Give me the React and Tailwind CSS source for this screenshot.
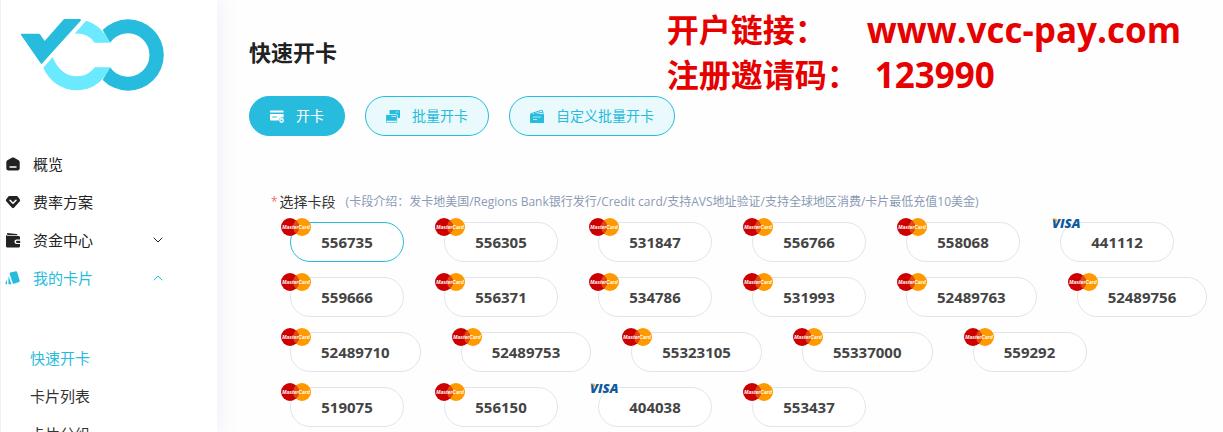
import React, { useState } from 'react'
import { ChevronDown, ChevronUp } from 'lucide-react'

const CARD_SEGMENTS = [
  { bin: '556735', brand: 'mastercard' },
  { bin: '556305', brand: 'mastercard' },
  { bin: '531847', brand: 'mastercard' },
  { bin: '556766', brand: 'mastercard' },
  { bin: '558068', brand: 'mastercard' },
  { bin: '441112', brand: 'visa' },
  { bin: '559666', brand: 'mastercard' },
  { bin: '556371', brand: 'mastercard' },
  { bin: '534786', brand: 'mastercard' },
  { bin: '531993', brand: 'mastercard' },
  { bin: '52489763', brand: 'mastercard' },
  { bin: '52489756', brand: 'mastercard' },
  { bin: '52489710', brand: 'mastercard' },
  { bin: '52489753', brand: 'mastercard' },
  { bin: '55323105', brand: 'mastercard' },
  { bin: '55337000', brand: 'mastercard' },
  { bin: '559292', brand: 'mastercard' },
  { bin: '519075', brand: 'mastercard' },
  { bin: '556150', brand: 'mastercard' },
  { bin: '404038', brand: 'visa' },
  { bin: '553437', brand: 'mastercard' },
]

const Logo = () => (
  <svg width="144" height="73" viewBox="60 54 432 219" role="img" aria-label="VCC">
    <path fill="#27bcdd" d="M308 90A107 107 0 1 1 308 240L330 202A65 65 0 1 0 330 128Z" />
    <path fill="#6beaff" d="M258 62Q304 75 330 128H284Q262 98 224 101Z" />
    <path fill="#6beaff" d="M158 171L130 203C148 244 186 271 231 271C276 271 312 244 330 202H284C272 219 253 229 231 229C196 229 172 206 158 171Z" />
    <path fill="#27bcdd" d="M65 101H116Q119 101 121 104L134 123L190 59Q192 57 195 57H240Q245 58 242 62L124 193L63 105Q62 102 65 101Z" />
  </svg>
)

/* Sidebar icons */
const HomeIcon = () => (
  <svg width="16" height="16" viewBox="0 0 16 16" fill="currentColor" aria-hidden="true">
    <path fillRule="evenodd" d="M8 1.500c.5 0 .8.100 1.200.3l4 2.200c1 .5 1.500 1.300 1.500 2.300v6c0 1.300-.9 2.200-2.200 2.200h-9c-1.300 0-2.200-.9-2.200-2.200v-6c0-1 .5-1.800 1.500-2.300l4-2.200c.4-.2.700-.3 1.200-.3zM4.500 10.200v1.500h7v-1.500z" />
  </svg>
)

const DiamondIcon = () => (
  <svg width="16" height="16" viewBox="0 0 16 16" aria-hidden="true">
    <path fill="currentColor" d="M4.500 2h7c.5 0 .9.2 1.200.6l2.200 3c.4.6.4 1.200-.1 1.700L9 13.700c-.6.6-1.400.6-2 0L1.200 7.300C.7 6.800.7 6.200 1.100 5.600l2.200-3c.3-.4.700-.6 1.200-.6z" />
    <path fill="none" stroke="#fff" strokeWidth="1.5" strokeLinecap="round" strokeLinejoin="round" d="M5 6.300L8 9.300l3-3" />
  </svg>
)

const WalletIcon = () => (
  <svg width="16" height="16" viewBox="0 0 16 16" fill="currentColor" aria-hidden="true">
    <path d="M2 1l9.500 1c.6.100 1 .5 1 1.200H2.500z" />
    <path d="M1 1.500c0 1.800.6 2.500 2.200 2.500h10.300c.9 0 1.500.6 1.500 1.500v2h-3.300a2.300 2.300 0 0 0 0 4.600H15v1.900c0 .9-.6 1.500-1.500 1.500h-11c-.9 0-1.500-.6-1.500-1.500z" />
    <path d="M12 8.700H15.200v2.200H12a1.100 1.100 0 0 1 0-2.200z" />
  </svg>
)

const CardsIcon = () => (
  <svg width="16" height="16" viewBox="0 0 16 16" fill="currentColor" aria-hidden="true">
    <path d="M5.300 2.600l5.600-1.300c.6-.1 1 .1 1.200.7l2.600 8.800c.2.600-.1 1-.6 1.200l-5.200 1.800c-.6.200-1-.1-1.200-.6L4.600 3.800c-.2-.6.100-1.100.7-1.200z" />
    <path d="M3.500 6l3 8.300H4.300c-.6 0-.9-.3-.9-.9z" />
    <path d="M2 9.500v4.800H.8c-.3 0-.5-.3-.4-.7z" />
  </svg>
)

/* Action icons */
const OpenCardIcon = () => (
  <svg width="14" height="14" viewBox="0 0 14 14" aria-hidden="true">
    <path fill="currentColor" d="M.8 1.500h12c.5 0 .8.300.8.800v1.200H0V2.300c0-.5.300-.8.800-.8zM0 5h13.600v3.500a3.500 3.500 0 0 0-4.900 3H.8c-.5 0-.8-.3-.8-.8z" />
    <path fill="none" stroke="#27bcdd" strokeWidth="1" d="M2.300 8h4.500" />
    <circle cx="11.6" cy="11.5" r="1.700" fill="none" stroke="currentColor" strokeWidth="1.400" />
  </svg>
)

const BatchIcon = () => (
  <svg width="14" height="14" viewBox="0 0 14 14" aria-hidden="true">
    <path fill="currentColor" d="M4.300 1h8.900c.5 0 .8.300.8.800v6.400c0 .5-.3.800-.8.800H3.500V1.800c0-.5.300-.8.800-.8z" />
    <path fill="#9fe3f0" d="M9.500 2.500h3v1h-3z" />
    <path fill="currentColor" stroke="#e9f9fc" strokeWidth=".8" d="M.5 5.500h10c.5 0 .8.300.8.800v6.900c0 .5-.3.800-.8.800H.5c-.5 0-.8-.3-.8-.8V6.300c0-.5.300-.8.800-.8z" />
    <path fill="#e9f9fc" d="M.8 11.700h9.700v1.200H.8zM5.500 7.200h4.500v.8H5.500z" />
  </svg>
)

const CustomBatchIcon = () => (
  <svg width="14" height="14" viewBox="0 0 14 14" aria-hidden="true">
    <path fill="none" stroke="currentColor" strokeWidth="1" d="M.5 4.800L11.500 1.300c.5-.1.800 0 1 .5l.7 3M4 4.800l8.500-1.500" />
    <path fill="currentColor" d="M.8 5h12.400c.5 0 .8.300.8.800v7.400c0 .5-.3.800-.8.800H.8c-.5 0-.8-.3-.8-.8V5.800c0-.5.300-.8.800-.8z" />
    <path stroke="#b9ecf6" strokeWidth=".9" d="M3 8h8M3 10.500h4" />
  </svg>
)

/* Card brands */
const MasterCardBadge = () => (
  <svg className="absolute -left-2.5 -top-[5px]" width="30" height="18" viewBox="0 0 30 18" aria-hidden="true">
    <circle cx="21" cy="9" r="9" fill="#ff9900" />
    <circle cx="9" cy="9" r="9" fill="#cc0000" />
    <path fill="#e5480b" d="M15 2.300a9 9 0 0 1 0 13.400a9 9 0 0 1 0-13.400z" />
    <text x="15" y="11" textAnchor="middle" fontFamily="Liberation Sans, sans-serif" fontSize="5" fontWeight="700" fontStyle="italic" fill="#fff">MasterCard</text>
  </svg>
)

const VisaBadge = () => (
  <svg className="absolute -left-2.5 -top-2" width="34" height="18" viewBox="0 0 34 18" aria-hidden="true">
    <text x="1" y="13" fontFamily="Open Sans, sans-serif" fontSize="13" fontWeight="800" fontStyle="italic" fill="#0e5a9d">VISA</text>
    <path fill="#f7a823" d="M1 3.500h3.500q1.200 0 1.500 1.500l.6 2.500Q4.500 4.500 1 3.500z" />
  </svg>
)

const MENU = [
  { label: '概览', Icon: HomeIcon },
  { label: '费率方案', Icon: DiamondIcon },
  { label: '资金中心', Icon: WalletIcon, Arrow: ChevronDown },
  { label: '我的卡片', Icon: CardsIcon, Arrow: ChevronUp, active: true },
]

const SUBMENU = ['快速开卡', '卡片列表', '卡片分组']

const ACTIONS = [
  { label: '开卡', Icon: OpenCardIcon },
  { label: '批量开卡', Icon: BatchIcon },
  { label: '自定义批量开卡', Icon: CustomBatchIcon },
]

const Sidebar = () => (
  <aside className="w-[217px] shrink-0 bg-white border-l border-[#f0f1f6] shadow-[0_0_24px_rgba(60,80,180,0.1)] z-10">
    <div className="pl-[19px] pt-[18px]">
      <Logo />
    </div>
    <nav className="pt-[54px]">
      <ul>
        {MENU.map(({ label, Icon, Arrow, active }) => (
          <li key={label}>
            <a
              href="#"
              className={`flex items-center h-[38px] pl-1 pr-[51px] text-[15px] ${active ? 'text-[#27bcdd]' : 'text-[#222]'}`}
            >
              <Icon />
              <span className="flex-1 ml-3">{label}</span>
              {Arrow && <Arrow size={16} strokeWidth={1.5} />}
            </a>
          </li>
        ))}
      </ul>
      <ul className="mt-[42px]">
        {SUBMENU.map((label, i) => (
          <li key={label}>
            <a
              href="#"
              className={`flex items-center h-[38px] pl-[29px] text-[15px] ${i === 0 ? 'text-[#27bcdd]' : 'text-[#333]'}`}
            >
              {label}
            </a>
          </li>
        ))}
      </ul>
    </nav>
  </aside>
)

const App = () => {
  const [action, setAction] = useState('开卡')
  const [segment, setSegment] = useState('556735')

  return (
    <div className="flex h-screen overflow-hidden bg-[#fefefe] font-['Open_Sans','Noto_Sans_CJK_SC',sans-serif]" lang="zh-CN">
      <Sidebar />

      <main className="flex-1 min-w-0 pl-8">
        <header className="flex items-center justify-between h-24 pt-2 pr-[42px]">
          <h1 className="text-[22px] font-bold text-[#222]">快速开卡</h1>
          <div className="text-[32px] leading-[45px] font-bold text-[#e60000] whitespace-nowrap">
            <p className="flex">
              <span className="mr-10">开户链接：</span>
              <span className="text-[35px]">www.vcc-pay.com</span>
            </p>
            <p className="flex">
              <span className="mr-4">注册邀请码：</span>
              <span className="text-[35px]">123990</span>
            </p>
          </div>
        </header>

        <div className="flex gap-5">
          {ACTIONS.map(({ label, Icon }) => (
            <button
              key={label}
              type="button"
              onClick={() => setAction(label)}
              className={`flex items-center gap-3 h-10 px-5 rounded-full border border-[#27bcdd] text-sm ${
                action === label ? 'bg-[#27bcdd] text-white' : 'bg-[#e9f9fc] text-[#27bcdd]'
              }`}
            >
              <Icon />
              {label}
            </button>
          ))}
        </div>

        <section className="pl-[22px] pr-2 pt-14">
          <div className="flex items-center h-5 text-[#333]">
            <span className="mr-0.5 text-xs text-[#f56c6c]">*</span>
            <span id="segment-label" className="text-sm">选择卡段</span>
            <span className="ml-2.5 text-xs text-[#8b9ab5]">
              (卡段介绍：发卡地美国/Regions Bank银行发行/Credit card/支持AVS地址验证/支持全球地区消费/卡片最低充值10美金)
            </span>
          </div>

          <div role="group" aria-labelledby="segment-label" className="flex flex-wrap gap-x-10 gap-y-[15px] mt-2.5 pl-[19px]">
            {CARD_SEGMENTS.map(({ bin, brand }) => (
              <button
                key={bin}
                type="button"
                aria-pressed={segment === bin}
                onClick={() => setSegment(bin)}
                className={`relative h-10 min-w-[114px] px-[30px] rounded-full border bg-white text-[15px] font-bold text-[#444] ${
                  segment === bin ? 'border-[#27bcdd]' : 'border-[#dfe5ef]'
                }`}
              >
                {brand === 'visa' ? <VisaBadge /> : <MasterCardBadge />}
                {bin}
              </button>
            ))}
          </div>
        </section>
      </main>
    </div>
  )
}

export default App
